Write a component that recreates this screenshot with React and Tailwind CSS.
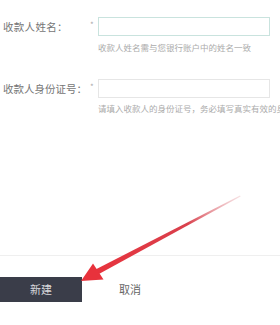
export default function App() {
  const font = { fontFamily: '"Noto Sans CJK SC", "Noto Sans", sans-serif' };
  return (
    <div className="relative w-[280px] h-[325px] bg-white overflow-hidden" style={font}>
      <div className="flex flex-col pt-[17px]">
        <div className="flex items-center h-[19px]">
          <div className="w-[90px] pl-[3px] text-[10.5px] text-[#767676] whitespace-nowrap tracking-[0.3px]">收款人姓名：</div>
          <div className="w-[8px] text-[8px] text-[#aaa] leading-none -mt-[3px]">*</div>
          <div className="w-[172px] h-[19px] border border-[#c9e3de] bg-white" />
        </div>
        <div className="ml-[98px] mt-[5px] h-[12px] leading-[12px] text-[8.5px] text-[#ababab] whitespace-nowrap">收款人姓名需与您银行账户中的姓名一致</div>
        <div className="flex items-center h-[19px] mt-[26px]">
          <div className="w-[90px] pl-[3px] text-[10.5px] text-[#767676] whitespace-nowrap">收款人身份证号：</div>
          <div className="w-[8px] text-[8px] text-[#aaa] leading-none -mt-[3px]">*</div>
          <div className="w-[172px] h-[19px] border border-[#e6e6e6] bg-white" />
        </div>
        <div className="ml-[98px] mt-[4px] h-[12px] leading-[12px] text-[8.5px] text-[#ababab] whitespace-nowrap">请填入收款人的身份证号，务必填写真实有效的身份证号</div>
        <div className="mt-[141px] border-t border-[#efefef]" />
        <div className="flex items-center mt-[21px]">
          <div className="w-[82px] h-[25px] bg-[#3a3d49] flex items-center justify-center text-[11px] text-[#d8d8dc]">新建</div>
          <div className="ml-[37px] text-[11px] text-[#666]">取消</div>
        </div>
      </div>
      <svg className="absolute left-0 top-0 pointer-events-none" width="280" height="325" viewBox="0 0 280 325">
        <defs>
          <linearGradient id="g" x1="240" y1="196" x2="90" y2="276" gradientUnits="userSpaceOnUse">
            <stop offset="0" stopColor="#e8b0b5" stopOpacity="0.4" />
            <stop offset="0.35" stopColor="#d9404c" />
            <stop offset="1" stopColor="#e8323c" />
          </linearGradient>
        </defs>
        <polygon points="240,195.5 240.6,196.6 98,274.5 95.5,269.5" fill="url(#g)" />
        <polygon points="81,281 93,263.5 103.5,279.5" fill="#e8323c" />
      </svg>
    </div>
  );
}
